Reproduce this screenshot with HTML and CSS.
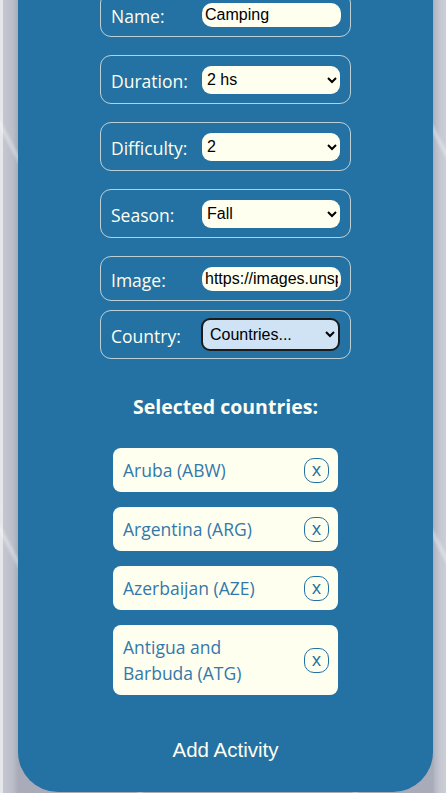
FILE: index.html
```html
<!DOCTYPE html>
<html lang="en">
<head>
<meta charset="utf-8">
<title>Create Activity</title>
<link rel="stylesheet" href="styles.css">
</head>
<body>
<main class="panel">
  <form class="form">
    <div class="field field--text">
      <label class="field__label" for="name">Name:</label>
      <input class="field__input" id="name" type="text" value="Camping">
    </div>
    <div class="field">
      <label class="field__label" for="duration">Duration:</label>
      <select class="field__select" id="duration"><option>2 hs</option></select>
    </div>
    <div class="field">
      <label class="field__label" for="difficulty">Difficulty:</label>
      <select class="field__select" id="difficulty"><option>2</option></select>
    </div>
    <div class="field">
      <label class="field__label" for="season">Season:</label>
      <select class="field__select" id="season"><option>Fall</option></select>
    </div>
    <div class="field field--text">
      <label class="field__label" for="image">Image:</label>
      <input class="field__input" id="image" type="text" value="https://images.unsplash.com/photo">
    </div>
    <div class="field field--tight">
      <label class="field__label" for="country">Country:</label>
      <select class="field__select field__select--active" id="country"><option>Countries...</option></select>
    </div>

    <h3 class="selected__title">Selected countries:</h3>
    <ul class="selected__list">
      <li class="chip"><span class="chip__name">Aruba (ABW)</span><button class="chip__remove" type="button">x</button></li>
      <li class="chip"><span class="chip__name">Argentina (ARG)</span><button class="chip__remove" type="button">x</button></li>
      <li class="chip"><span class="chip__name">Azerbaijan (AZE)</span><button class="chip__remove" type="button">x</button></li>
      <li class="chip"><span class="chip__name">Antigua and Barbuda (ATG)</span><button class="chip__remove" type="button">x</button></li>
    </ul>

    <button class="submit" type="button">Add Activity</button>
  </form>
</main>
</body>
</html>
```

FILE: styles.css
```css
html, body {
  margin: 0;
  padding: 0;
  height: 100%;
  overflow: hidden;
}

body {
  background:
    repeating-linear-gradient(62deg,
      rgba(255, 255, 255, 0) 0, rgba(255, 255, 255, 0) 120px,
      rgba(255, 255, 255, 0.35) 124px, rgba(255, 255, 255, 0) 128px,
      rgba(255, 255, 255, 0) 190px),
    linear-gradient(90deg,
      #e6e7eb 0, #e6e7eb 3px,
      #c4c7d0 3px, #bbbec9 13px, #a9acb8 18px,
      #a9acb8 433px, #b6b9c5 435px, #c5c8d1 440px, #cbced6 446px);
  font-family: "Open Sans", "Noto Sans", sans-serif;
}

.panel {
  width: 415px;
  margin: -8px 0 0 18px;
  height: 800px;
  box-sizing: border-box;
  background: #2471a3;
  border-radius: 0 0 40px 40px;
}

.form {
  display: flex;
  flex-direction: column;
  align-items: center;
}

.field {
  width: 251px;
  height: 49px;
  box-sizing: border-box;
  border: 1px solid rgba(240, 240, 230, 0.75);
  border-radius: 11px;
  display: flex;
  align-items: center;
  padding: 0 10px;
  margin-top: 18px;
}

.field:first-child { margin-top: 0; }

.field--text { height: 45px; }

.field--tight { margin-top: 9px; }

.field__label {
  width: 91px;
  flex: none;
  color: #fffff0;
  font-size: 17.5px;
  padding-top: 3px;
}

.field__input {
  width: 139px;
  height: 24px;
  box-sizing: border-box;
  border: none;
  border-radius: 10px;
  background: #fffff0;
  font-family: "Liberation Sans", Arial, sans-serif;
  font-size: 16px;
  color: #000;
  padding: 0 3px;
  margin: 0;
}

.field__select {
  width: 139px;
  height: 28px;
  box-sizing: border-box;
  border: none;
  border-radius: 9px;
  background-color: #fffff0;
  font-family: "Liberation Sans", Arial, sans-serif;
  font-size: 16px;
  color: #000;
  margin: 0;
  padding: 0 0 0 1px;
}

.field__select--active {
  width: 142px;
  height: 33px;
  margin-left: -1px;
  border: 2px solid #1b1b1b;
  border-radius: 9px;
  background-color: #cfe3f5;
  padding-left: 3px;
}

.selected__title {
  margin: 35px 0 0;
  font-size: 19.5px;
  font-weight: 700;
  color: #fffff0;
  line-height: 26px;
}

.selected__list {
  list-style: none;
  margin: 28px 0 0;
  padding: 0;
  display: flex;
  flex-direction: column;
  gap: 15px;
}

.chip {
  width: 225px;
  box-sizing: border-box;
  background: #fffff0;
  border-radius: 8px;
  display: flex;
  align-items: center;
  padding: 9px 9px 9px 10px;
}

.chip__name {
  flex: 1;
  max-width: 155px;
  margin-right: auto;
  color: #3378aa;
  font-size: 17.5px;
  line-height: 26px;
}

.chip__remove {
  width: 25px;
  height: 25px;
  flex: none;
  border: 1px solid #2471a3;
  border-radius: 10px;
  background: transparent;
  color: #2471a3;
  font-family: "Open Sans", sans-serif;
  font-size: 18px;
  line-height: 20px;
  padding: 0 0 2px;
  margin-left: auto;
}

.submit {
  margin-top: 43px;
  background: transparent;
  border: none;
  color: #fffff0;
  font-family: "Liberation Sans", Arial, sans-serif;
  font-size: 20.5px;
  padding: 0;
}
```
